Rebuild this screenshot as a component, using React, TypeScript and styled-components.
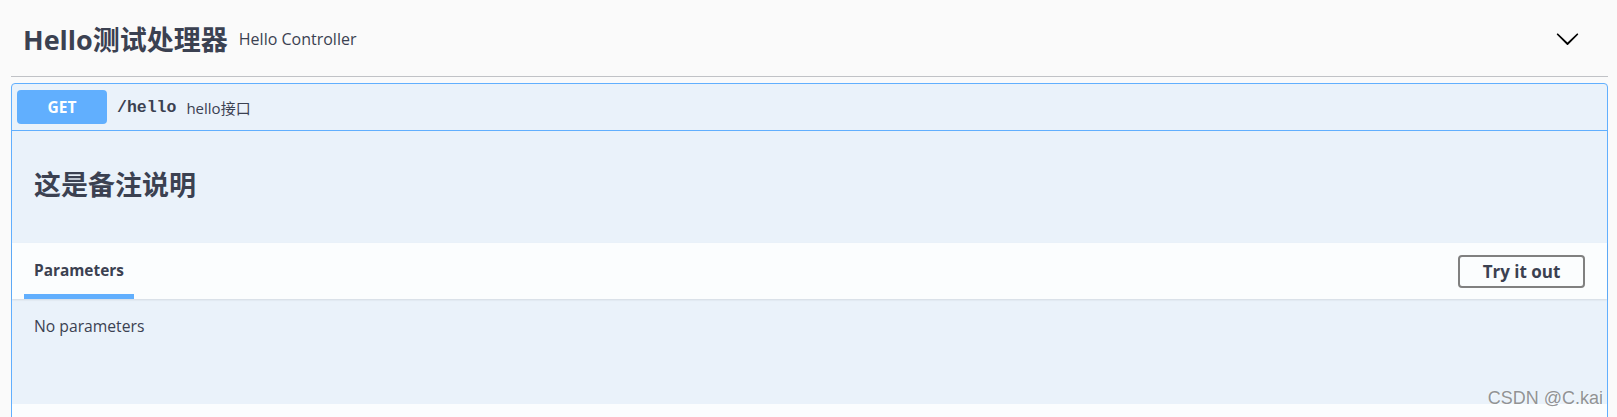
import React from "react";
import styled, { createGlobalStyle } from "styled-components";

const GlobalStyle = createGlobalStyle`
  html, body {
    margin: 0;
    padding: 0;
    background: #fafafa;
  }
  body {
    font-family: "Open Sans", "Noto Sans CJK SC", sans-serif;
    color: #3b4151;
  }
  * { box-sizing: border-box; }
`;

const Page = styled.div`
  position: relative;
  width: 1617px;
  height: 417px;
  overflow: hidden;
  padding: 0 9px 0 11px;
`;

const TagHeader = styled.div`
  display: flex;
  align-items: center;
  height: 77px;
  border-bottom: 1px solid rgba(59, 65, 81, 0.3);
  padding: 0 28px 0 12px;
`;

const TagTitle = styled.h3`
  margin: 0;
  font-size: 27px;
  font-weight: 700;
  color: #3b4151;
  font-family: "Open Sans", "Noto Sans CJK SC", sans-serif;
`;

const TagSmall = styled.small`
  margin-left: 11px;
  font-size: 16px;
  color: #3b4151;
  flex: 1;
  padding-top: 2px;
`;

const ExpandButton = styled.button`
  border: none;
  background: none;
  padding: 0;
  display: flex;
  width: 25px;
  height: 25px;
  cursor: pointer;
`;

const Opblock = styled.div`
  margin-top: 6px;
  border: 1px solid #61affe;
  border-radius: 4px;
  background: rgba(97, 175, 254, 0.1);
  height: 400px;
`;

const Summary = styled.div`
  display: flex;
  align-items: center;
  padding: 6px 5px;
  border-bottom: 1px solid #61affe;
`;

const MethodBadge = styled.span`
  display: flex;
  align-items: center;
  justify-content: center;
  width: 90px;
  height: 34px;
  border-radius: 4px;
  background: #61affe;
  color: #fff;
  font-size: 15.5px;
  font-weight: 700;
`;

const Path = styled.span`
  margin-left: 10px;
  font-family: "Liberation Mono", monospace;
  font-weight: 700;
  font-size: 16.5px;
  color: #3b4151;
`;

const SummaryDesc = styled.span`
  margin-left: 10px;
  font-size: 15px;
  color: #3b4151;
`;

const Description = styled.div`
  height: 112px;
  display: flex;
  align-items: center;
  padding: 0 22px 8px;
`;

const DescHeading = styled.h1`
  margin: 0;
  font-size: 27px;
  font-weight: 700;
  color: #3b4151;
`;

const SectionHeader = styled.div`
  display: flex;
  align-items: center;
  justify-content: space-between;
  height: 56px;
  padding: 0 22px 0 12px;
  background: rgba(255, 255, 255, 0.8);
  box-shadow: 0 1px 2px rgba(0, 0, 0, 0.1);
`;

const Tab = styled.div<{ $active?: boolean }>`
  align-self: stretch;
  display: flex;
  align-items: center;
  padding: 4px 10px 0;
  border-bottom: 5px solid ${(p) => (p.$active ? "#61affe" : "transparent")};
  font-size: 15.4px;
  font-weight: 700;
  color: #3b4151;
`;

const TryButton = styled.button`
  width: 127px;
  height: 33px;
  border: 2px solid #808080;
  border-radius: 4px;
  background: transparent;
  font-family: "Open Sans", sans-serif;
  font-size: 17px;
  font-weight: 700;
  color: #3b4151;
  padding: 0;
`;

const SectionBody = styled.div`
  height: 105px;
  padding: 16px 22px 0;
  font-size: 15.7px;
  color: #3b4151;
`;

const NextHeader = styled.div`
  height: 40px;
  background: rgba(255, 255, 255, 0.8);
`;

const Watermark = styled.div`
  position: absolute;
  right: 14px;
  top: 388px;
  font-family: "Liberation Sans", Arial, sans-serif;
  font-size: 18px;
  color: rgba(120, 120, 120, 0.8);
  text-shadow: 1px 1px 1px rgba(255, 255, 255, 0.6);
`;

function Chevron() {
  return (
    <svg width="25" height="25" viewBox="0 0 20 20" aria-hidden="true">
      <path
        fill="#000"
        d="M17.418 6.109c.272-.268.709-.268.979 0s.271.701 0 .969l-7.908 7.830c-.27.268-.707.268-.979 0l-7.908-7.830c-.27-.268-.27-.701 0-.969.271-.268.709-.268.979 0L10 13.25l7.418-7.141z"
      />
    </svg>
  );
}

export default function App() {
  return (
    <>
      <GlobalStyle />
      <Page>
        <TagHeader>
          <TagTitle>Hello测试处理器</TagTitle>
          <TagSmall>Hello Controller</TagSmall>
          <ExpandButton aria-label="collapse">
            <Chevron />
          </ExpandButton>
        </TagHeader>
        <Opblock>
          <Summary>
            <MethodBadge>GET</MethodBadge>
            <Path>/hello</Path>
            <SummaryDesc>hello接口</SummaryDesc>
          </Summary>
          <Description>
            <DescHeading>这是备注说明</DescHeading>
          </Description>
          <SectionHeader>
            <Tab $active>Parameters</Tab>
            <TryButton>Try it out</TryButton>
          </SectionHeader>
          <SectionBody>No parameters</SectionBody>
          <NextHeader />
        </Opblock>
        <Watermark>CSDN @C.kai</Watermark>
      </Page>
    </>
  );
}
